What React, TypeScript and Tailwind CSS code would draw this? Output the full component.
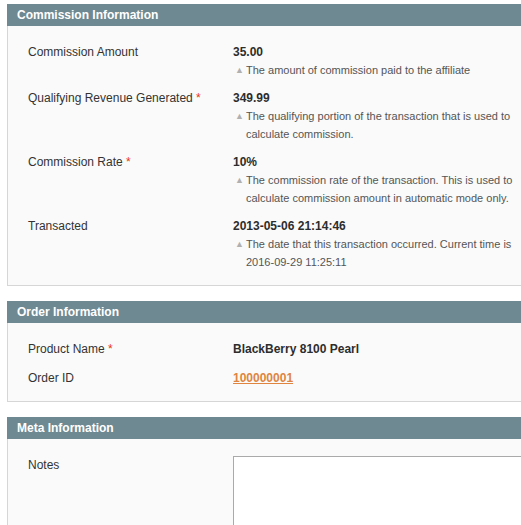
import React from "react";

type Row = { label: string; required?: boolean; value: React.ReactNode; note?: string };

const font = { fontFamily: '"Liberation Sans", Arial, sans-serif' };

function Note({ text }: { text: string }) {
  return (
    <div className="flex text-[11px] leading-[18px] text-[#555]">
      <span className="w-[13px] shrink-0 pl-[2px] text-[9px] text-[#b0b0b0]">▲</span>
      <span className="w-[270px]">{text}</span>
    </div>
  );
}

function Section({ title, children, gap = "gap-[10px]" }: { title: string; children: React.ReactNode; gap?: string }) {
  return (
    <div className="mb-[15px] ml-[7px]">
      <div className="h-[22px] bg-[#6f8992] px-[10px] text-[12px] font-bold leading-[22px] text-white">{title}</div>
      <div className={`flex flex-col ${gap} border-b border-l border-[#d6d6d6] bg-[#fafafa] pb-[14px] pl-[20px] pt-[17px]`}>
        {children}
      </div>
    </div>
  );
}

function FieldRow({ row }: { row: Row }) {
  return (
    <div className="flex">
      <div className="w-[205px] shrink-0 text-[12px] leading-[18px] text-[#333]">
        {row.label}
        {row.required && <span className="text-[#eb340a]"> *</span>}
      </div>
      <div>
        <div className="text-[12px] font-bold leading-[18px] text-[#2d2d2d]">{row.value}</div>
        {row.note && <Note text={row.note} />}
      </div>
    </div>
  );
}

const commission: Row[] = [
  { label: "Commission Amount", value: "35.00", note: "The amount of commission paid to the affiliate" },
  {
    label: "Qualifying Revenue Generated",
    required: true,
    value: "349.99",
    note: "The qualifying portion of the transaction that is used to calculate commission.",
  },
  {
    label: "Commission Rate",
    required: true,
    value: "10%",
    note: "The commission rate of the transaction. This is used to calculate commission amount in automatic mode only.",
  },
  {
    label: "Transacted",
    value: "2013-05-06 21:14:46",
    note: "The date that this transaction occurred. Current time is 2016-09-29 11:25:11",
  },
];

export default function App() {
  return (
    <div className="h-[525px] w-[521px] overflow-hidden bg-white pt-[4px]" style={font}>
      <Section title="Commission Information">
        {commission.map((r) => (
          <FieldRow key={r.label} row={r} />
        ))}
      </Section>

      <Section title="Order Information" gap="gap-[11px]">
        <FieldRow row={{ label: "Product Name", required: true, value: "BlackBerry 8100 Pearl" }} />
        <FieldRow
          row={{
            label: "Order ID",
            value: (
              <a href="#" className="text-[#df8540] underline">
                100000001
              </a>
            ),
          }}
        />
      </Section>

      <Section title="Meta Information">
        <div className="flex">
          <div className="w-[205px] shrink-0 text-[12px] leading-[18px] text-[#333]">Notes</div>
          <textarea className="h-[100px] w-[320px] shrink-0 border border-[#aaaaaa] bg-white" />
        </div>
      </Section>
    </div>
  );
}
